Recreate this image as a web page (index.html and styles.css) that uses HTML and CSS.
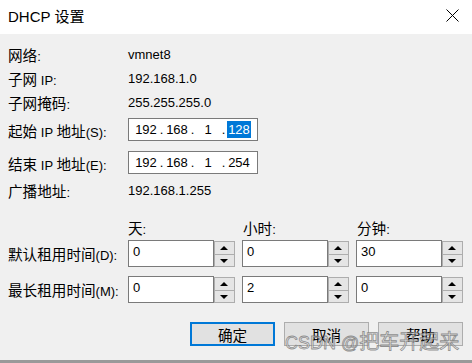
FILE: index.html
```
<!DOCTYPE html>
<html>
	<head>
		<title>DHCP 设置</title>
		<meta charset="utf-8" />
		<link rel="stylesheet" href="styles.css">
	</head>
<body>
	<div id="window">
		<div id="titlebar">
			<span class="title">DHCP <span class="zh">设置</span></span>
			<svg class="close" width="13" height="13" viewBox="0 0 13 13"><path d="M0.5 0.5 L12.5 12.5 M12.5 0.5 L0.5 12.5" stroke="#000" stroke-width="1" fill="none"/></svg>
		</div>
		<div id="content">
			<div class="row info"><span class="lbl"><span class="zh">网络</span>:</span><span class="val">vmnet8</span></div>
			<div class="row info"><span class="lbl"><span class="zh">子网</span> IP:</span><span class="val">192.168.1.0</span></div>
			<div class="row info"><span class="lbl"><span class="zh">子网掩码</span>:</span><span class="val">255.255.255.0</span></div>

			<div class="row ip first"><span class="lbl"><span class="zh">起始</span> IP <span class="zh">地址</span>(S):</span>
				<div class="ipbox"><span class="oct">192</span><span class="dot">.</span><span class="oct">168</span><span class="dot">.</span><span class="oct">1</span><span class="dot">.</span><span class="oct"><span class="sel">128</span></span></div>
			</div>
			<div class="row ip"><span class="lbl"><span class="zh">结束</span> IP <span class="zh">地址</span>(E):</span>
				<div class="ipbox"><span class="oct">192</span><span class="dot">.</span><span class="oct">168</span><span class="dot">.</span><span class="oct">1</span><span class="dot">.</span><span class="oct">254</span></div>
			</div>
			<div class="row info bcast"><span class="lbl"><span class="zh">广播地址</span>:</span><span class="val">192.168.1.255</span></div>

			<div class="lease head">
				<span class="lbl"></span>
				<span class="col"><span class="zh">天</span>:</span>
				<span class="col"><span class="zh">小时</span>:</span>
				<span class="col"><span class="zh">分钟</span>:</span>
			</div>
			<div class="lease first">
				<span class="lbl"><span class="zh">默认租用时间</span>(D):</span>
				<div class="spin"><div class="num">0</div><div class="arrows"><div class="up"></div><div class="down"></div></div></div>
				<div class="spin"><div class="num">0</div><div class="arrows"><div class="up"></div><div class="down"></div></div></div>
				<div class="spin"><div class="num">30</div><div class="arrows"><div class="up"></div><div class="down"></div></div></div>
			</div>
			<div class="lease">
				<span class="lbl"><span class="zh">最长租用时间</span>(M):</span>
				<div class="spin"><div class="num">0</div><div class="arrows"><div class="up"></div><div class="down"></div></div></div>
				<div class="spin"><div class="num">2</div><div class="arrows"><div class="up"></div><div class="down"></div></div></div>
				<div class="spin"><div class="num">0</div><div class="arrows"><div class="up"></div><div class="down"></div></div></div>
			</div>

			<div class="buttons">
				<button class="btn default"><span class="zh">确定</span></button>
				<button class="btn"><span class="zh">取消</span></button>
				<button class="btn"><span class="zh">帮助</span></button>
				<div class="watermark">CSDN @<span class="wzh">把车开起来</span></div>
			</div>
		</div>
		<div id="bottom"></div>
	</div>
</body>
</html>
```
FILE: styles.css
```
body {
	margin: 0;
	font-family: "Liberation Sans", "Noto Sans CJK SC", sans-serif;
	font-size: 13px;
	color: #000;
}
.zh {
	font-family: "Noto Sans CJK SC", sans-serif;
	font-size: 14.6px;
}
div#window {
	width: 472px;
	height: 363px;
	overflow: hidden;
	background-color: #f0f0f0;
}
div#titlebar {
	height: 34px;
	box-sizing: border-box;
	padding: 0 13px 3px 8px;
	background-color: #fff;
	display: flex;
	align-items: center;
	justify-content: space-between;
}
div#titlebar .title {
	font-size: 15px;
}
div#titlebar .title .zh {
	font-size: 15px;
}
div#content {
	padding: 8px 0 0 8px;
}
.row {
	display: flex;
	align-items: center;
}
.row .lbl {
	width: 120px;
	white-space: nowrap;
}
.row.info {
	height: 24px;
}
.row.ip {
	height: 23px;
	margin-top: 10px;
}
.row.ip.first {
	margin-top: 4px;
}
.row.ip .lbl {
	padding-top: 2px;
}
.row.bcast {
	margin-top: 4px;
}
.ipbox {
	width: 130px;
	height: 23px;
	box-sizing: border-box;
	border: 1px solid #7a7a7a;
	background-color: #fff;
	display: flex;
	align-items: center;
	padding-left: 5px;
}
.ipbox .oct {
	width: 24px;
	text-align: center;
}
.ipbox .dot {
	width: 7px;
	text-align: center;
}
.ipbox .sel {
	background-color: #0078d7;
	color: #fff;
	padding: 1px 1px;
}
.lease {
	display: flex;
	gap: 7px;
	height: 27px;
	align-items: center;
	margin-top: 9px;
}
.lease.first {
	margin-top: 3px;
}
.lease.head {
	height: 20px;
	margin-top: 15px;
}
.lease .lbl {
	width: 113px;
	white-space: nowrap;
}
.lease .col {
	width: 107px;
}
.lease .col:nth-child(3) {
	padding-left: 1px;
}
.spin {
	width: 107px;
	height: 27px;
	display: flex;
}
.spin .num {
	flex: 1;
	box-sizing: border-box;
	border: 1px solid #7a7a7a;
	background-color: #fff;
	padding: 2px 4px;
	line-height: 17px;
}
.spin .arrows {
	width: 21px;
	height: 26px;
	margin-top: 1px;
	box-sizing: border-box;
	border: 1px solid #adadad;
	display: flex;
	flex-direction: column;
	background-color: #adadad;
	gap: 1px;
}
.spin .up, .spin .down {
	flex: 1;
	background-color: #e5e5e5;
	position: relative;
}
.spin .up::after, .spin .down::after {
	content: "";
	position: absolute;
	left: 5px;
	width: 0;
	height: 0;
	border-left: 4px solid transparent;
	border-right: 4px solid transparent;
}
.spin .up::after {
	top: 4px;
	border-bottom: 4px solid #000;
}
.spin .down::after {
	top: 4px;
	border-top: 4px solid #000;
}
.buttons {
	position: relative;
	display: flex;
	justify-content: flex-end;
	gap: 9px;
	height: 24px;
	margin-top: 19px;
	padding-right: 9px;
}
.btn {
	width: 85px;
	height: 24px;
	box-sizing: border-box;
	border: 1px solid #adadad;
	background-color: #e1e1e1;
	font-family: inherit;
	color: #000;
	padding: 0;
	margin: 0;
}
.btn.default {
	border: 2px solid #0078d7;
}
.watermark {
	position: absolute;
	left: 277px;
	top: 4px;
	font-size: 18px;
	white-space: nowrap;
	color: rgba(235, 235, 235, 0.6);
	-webkit-text-stroke: 0.8px rgba(100, 100, 100, 0.7);
}
.watermark .wzh {
	font-family: "Noto Sans CJK SC", sans-serif;
	font-size: 20px;
}
div#bottom {
	height: 3px;
	margin-top: 14px;
	background-color: #999;
}
```
